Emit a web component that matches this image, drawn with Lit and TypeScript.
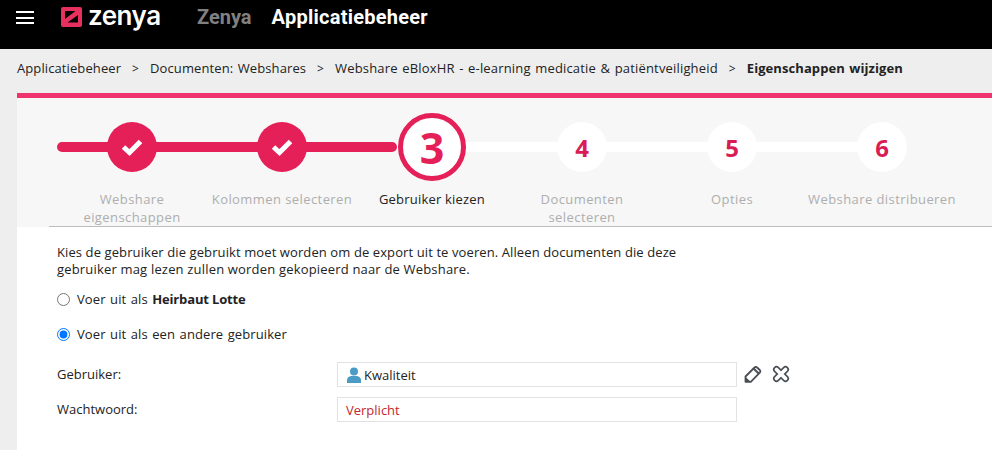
import { LitElement, html, css } from "lit";
import { customElement } from "lit/decorators.js";

const check = html`<svg width="24" height="20" viewBox="0 0 24 20"><path d="M3.500 10l6 5.500L20.500 4.500" fill="none" stroke="#fff" stroke-width="5"/></svg>`;

@customElement("app-root")
export class AppRoot extends LitElement {
  static styles = css`
    :host { display: block; width: 992px; height: 450px; overflow: hidden; background: #eee; font-family: "Open Sans", sans-serif; font-size: 13px; color: #222; }
    .top { height: 49px; background: #000; display: flex; align-items: flex-start; color: #fff; }
    .burger { margin: 11px 0 0 16px; width: 18px; display: grid; gap: 3.500px; }
    .burger i { display: block; height: 2px; background: #fff; }
    .logo { margin: 6px 0 0 27px; }
    .brand { margin-left: 6px; font: 600 26px/31px Inter, sans-serif; letter-spacing: -0.5px; width: 73px; }
    .zen { margin-left: 36px; font: 700 20px/34px Roboto, sans-serif; color: #808080; }
    .app { margin-left: 20px; font: 700 20px/34px Roboto, sans-serif; letter-spacing: 0.25px; color: #fff; }
    .crumbs { box-sizing: border-box; height: 44px; padding: 0 0 6px 17px; display: flex; align-items: center; font-size: 13px; letter-spacing: 0.1px; word-spacing: 1px; color: #222; white-space: pre; }
    .crumbs b { font-weight: 700; letter-spacing: 0.08px; }
    .crumbs .long { letter-spacing: 0.17px; }
    .crumbs span.sep { margin: 0 11px; font-size: 12px; }
    .main { margin-left: 17px; background: #fff; border-top: 5px solid #f0326e; height: 352px; }
    .wizard { background: #f7f7f7; height: 129px; position: relative; padding-left: 40px; display: grid; grid-template-columns: repeat(6, 150px); align-content: start; }
    .rail { position: absolute; top: 44px; height: 10px; border-radius: 5px; }
    .rail.done { left: 40px; width: 340px; background: #e51f57; }
    .rail.todo { left: 380px; width: 480px; background: #fff; }
    .step { position: relative; display: flex; flex-direction: column; align-items: center; padding-top: 24px; }
    .dot { width: 50px; height: 50px; border-radius: 50%; display: flex; align-items: center; justify-content: center; background: #fff; color: #d91c57; font-weight: 700; font-size: 24px; }
    .dot.done { background: #e51f57; }
    .dot.active { width: 68px; height: 68px; margin: -9px 0; box-sizing: border-box; border: 5px solid #e51f57; font-size: 43px; color: #e51f57; font-weight: 700; line-height: 1; }
    .label { margin-top: 18px; width: 150px; text-align: center; line-height: 18px; color: #aeaeae; letter-spacing: 0.42px; }
    .label.active { color: #222; letter-spacing: 0.2px; }
    .divider { margin-left: 32px; height: 1px; background: #bdbdbd; margin-top: -1px; position: relative; }
    .body { padding: 17px 0 0 40px; }
    .intro { margin: 0; line-height: 17px; width: 680px; }
    .l1 { letter-spacing: 0.1px; }
    .l2 { letter-spacing: 0.18px; }
    .radio { display: flex; align-items: center; gap: 7px; margin-top: 11px; height: 20px; letter-spacing: 0.1px; word-spacing: 1px; }
    .radio + .radio { margin-top: 15px; }
    .radio b { letter-spacing: -0.15px; word-spacing: 0; }
    .radio input { margin: 0; width: 13px; height: 13px; }
    .field { display: grid; grid-template-columns: 280px 400px auto; align-items: center; }
    .field > span { padding-bottom: 2px; }
    .field.first { margin-top: 18px; }
    .field + .field { margin-top: 10px; }
    .input { box-sizing: border-box; height: 25px; border: 1px solid #e2e2e2; display: flex; align-items: center; padding-left: 8px; background: #fff; }
    .input.user { padding-left: 9px; gap: 3px; }
    .req { color: #c4262e; }
    .actions { display: flex; gap: 10px; margin-left: 7px; align-items: center; margin-top: -2px; }
    svg { display: block; }
  `;

  private step(n: number, state: string, label: unknown) {
    return html`<div class="step">
      <div class="dot ${state}">${state === "done" ? check : n}</div>
      <div class="label ${state === "active" ? "active" : ""}">${label}</div>
    </div>`;
  }

  render() {
    return html`
      <div class="top">
        <div class="burger"><i></i><i></i><i></i></div>
        <svg class="logo" width="21" height="21" viewBox="0 0 21 21">
          <rect x="0" y="1" width="21" height="20" rx="2" fill="#e8305f"/>
          <path d="M4 5h10.500L4 13zM17 9v7.500H6.500z" fill="#000"/>
        </svg>
        <div class="brand">zenya</div>
        <div class="zen">Zenya</div>
        <div class="app">Applicatiebeheer</div>
      </div>
      <div class="crumbs">Applicatiebeheer<span class="sep">&gt;</span>Documenten: Webshares<span class="sep">&gt;</span><span class="long">Webshare eBloxHR - e-learning medicatie &amp; patiëntveiligheid</span><span class="sep">&gt;</span><b>Eigenschappen wijzigen</b></div>
      <div class="main">
        <div class="wizard">
          <div class="rail todo"></div>
          <div class="rail done"></div>
          ${this.step(1, "done", html`Webshare<br />eigenschappen`)}
          ${this.step(2, "done", "Kolommen selecteren")}
          ${this.step(3, "active", "Gebruiker kiezen")}
          ${this.step(4, "", html`Documenten<br />selecteren`)}
          ${this.step(5, "", "Opties")}
          ${this.step(6, "", "Webshare distribueren")}
        </div>
        <div class="divider"></div>
        <div class="body">
          <p class="intro"><span class="l1">Kies de gebruiker die gebruikt moet worden om de export uit te voeren. Alleen documenten die deze</span><br /><span class="l2">gebruiker mag lezen zullen worden gekopieerd naar de Webshare.</span></p>
          <label class="radio"><input type="radio" name="u" /><span>Voer uit als <b>Heirbaut Lotte</b></span></label>
          <label class="radio"><input type="radio" name="u" checked /><span>Voer uit als een andere gebruiker</span></label>
          <div class="field first">
            <span>Gebruiker:</span>
            <div class="input user">
              <svg width="14" height="16" viewBox="0 0 14 16"><circle cx="7" cy="4.500" r="4" fill="#4a9cc7"/><path d="M0 16v-3c0-2.500 2-3.500 4-4h6c2 .5 4 1.500 4 4v3z" fill="#4a9cc7"/></svg>
              <span>Kwaliteit</span>
            </div>
            <div class="actions">
              <svg width="18" height="18" viewBox="0 0 18 18"><path d="M1.500 11.500L10.500 2.500a2 2 0 0 1 2.600 0L15.800 5a2 2 0 0 1 0 2.600L6.800 16.800H1.500z" fill="#fff" stroke="#4a4f55" stroke-width="1.800" stroke-linejoin="round"/><path d="M1 11.500L7 17H1z" fill="#4a4f55"/><path d="M9.500 3.500l5.200 5" stroke="#4a4f55" stroke-width="2"/></svg>
              <svg width="18" height="18" viewBox="0 0 18 18"><path d="M4.500 4.500L13.500 13.500M13.500 4.500L4.500 13.500" stroke="#4a4f55" stroke-width="7" stroke-linecap="round"/><path d="M4.500 4.500L13.500 13.500M13.500 4.500L4.500 13.500" stroke="#fff" stroke-width="3.800" stroke-linecap="round"/></svg>
            </div>
          </div>
          <div class="field">
            <span>Wachtwoord:</span>
            <div class="input req">Verplicht</div>
          </div>
        </div>
      </div>
    `;
  }
}
